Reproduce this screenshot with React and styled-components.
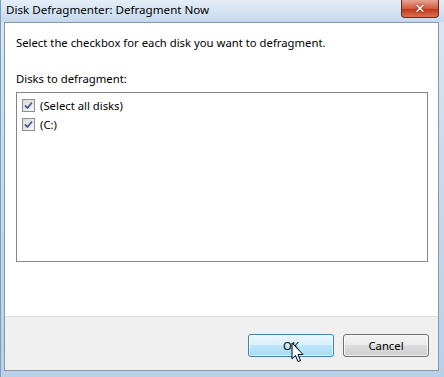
import React from "react";
import styled, { createGlobalStyle } from "styled-components";

const GlobalStyle = createGlobalStyle`
  html, body {
    margin: 0;
    padding: 0;
    overflow: hidden;
  }
  body {
    font-family: "Segoe UI", "Noto Sans", "Liberation Sans", sans-serif;
    font-size: 11.3px;
    color: #000;
  }
`;

const Window = styled.div`
  position: relative;
  width: 444px;
  height: 377px;
  display: flex;
  flex-direction: column;
  background: linear-gradient(180deg, #dbe8f5 0%, #c9dcef 40%, #b9d0e8 100%);
  box-sizing: border-box;
  border-left: 1px solid #7f9db9;
`;

const TitleBar = styled.div`
  height: 22px;
  display: flex;
  align-items: flex-start;
  padding-left: 5px;
  background: linear-gradient(180deg, #e4eef8 0%, #d2e2f2 60%, #c4d7ec 100%);
`;

const Title = styled.div`
  line-height: 20px;
  font-size: 11.6px;
  color: #000;
  flex: 1;
`;

const CloseButton = styled.div`
  width: 38px;
  height: 18px;
  margin-right: 5px;
  box-sizing: border-box;
  border: 1px solid #6b2a20;
  border-top: none;
  border-radius: 0 0 4px 4px;
  background: linear-gradient(180deg, #e8a493 0%, #d4593f 50%, #c2381c 55%, #d8724f 100%);
  display: flex;
  align-items: center;
  justify-content: center;
  color: #fff;
  font-weight: bold;
  font-size: 13px;
  text-shadow: 0 0 2px #5a1408;
  font-family: "DejaVu Sans", sans-serif;
`;

const Client = styled.div`
  flex: 1;
  margin: 0 5px 6px 3px;
  border: 1px solid #8497ad;
  display: flex;
  flex-direction: column;
  background: #fff;
`;

const Content = styled.div`
  flex: 1;
  padding: 12px 10px 0 11px;
  display: flex;
  flex-direction: column;
`;

const Text = styled.div`
  line-height: 16px;
  margin-bottom: ${(p) => p.$gap || 0}px;
`;

const ListBox = styled.div`
  height: 170px;
  border: 1px solid #828790;
  box-sizing: border-box;
  padding: 3px 5px;
  margin-top: 5px;
  display: flex;
  flex-direction: column;
`;

const Item = styled.div`
  display: flex;
  align-items: center;
  height: 19px;
  gap: 5px;
`;

const Check = styled.div`
  width: 13px;
  height: 13px;
  box-sizing: border-box;
  border: 1px solid #8f8f8f;
  background: linear-gradient(135deg, #dcdcdc 0%, #f6f6f6 100%);
  display: flex;
  align-items: center;
  justify-content: center;
`;

const Footer = styled.div`
  height: 50px;
  border-top: 1px solid #dfdfdf;
  background: #f0f0f0;
  display: flex;
  justify-content: flex-end;
  align-items: center;
  gap: 9px;
  padding: 3px 9px 0 0;
`;

const Button = styled.div`
  width: 86px;
  height: 23px;
  box-sizing: border-box;
  border: 1px solid ${(p) => (p.$hover ? "#3c7fb1" : "#707070")};
  border-radius: 3px;
  display: flex;
  align-items: center;
  justify-content: center;
  background: ${(p) =>
    p.$hover
      ? "linear-gradient(180deg, #eaf6fd 0%, #d9f0fc 50%, #bee6fd 50%, #a7d9f5 100%)"
      : "linear-gradient(180deg, #f2f2f2 0%, #ebebeb 50%, #dddddd 50%, #cfcfcf 100%)"};
  box-shadow: inset 0 0 0 1px rgba(255, 255, 255, 0.7);
`;

const Cursor = styled.svg`
  position: absolute;
  left: 290px;
  top: 342px;
`;

const CheckMark = () => (
  <svg width="9" height="9" viewBox="0 0 9 9">
    <path d="M1 4.5 L3.5 7 L8 1.5" fill="none" stroke="#4a5f97" strokeWidth="1.8" />
  </svg>
);

const App = () => {
  return (
    <>
      <GlobalStyle />
      <Window>
        <TitleBar>
          <Title>Disk Defragmenter: Defragment Now</Title>
          <CloseButton>✕</CloseButton>
        </TitleBar>
        <Client>
          <Content>
            <Text $gap={20}>Select the checkbox for each disk you want to defragment.</Text>
            <Text>Disks to defragment:</Text>
            <ListBox>
              <Item>
                <Check>
                  <CheckMark />
                </Check>
                (Select all disks)
              </Item>
              <Item>
                <Check>
                  <CheckMark />
                </Check>
                (C:)
              </Item>
            </ListBox>
          </Content>
          <Footer>
            <Button $hover>OK</Button>
            <Button>Cancel</Button>
          </Footer>
        </Client>
        <Cursor width="14" height="22" viewBox="0 0 14 22">
          <path
            d="M1 1 L1 17 L4.5 13.5 L7 19.5 L9.5 18.5 L7 12.5 L12 12.5 Z"
            fill="#fff"
            stroke="#000"
            strokeWidth="1"
            strokeLinejoin="miter"
          />
        </Cursor>
      </Window>
    </>
  );
};

export default App;
